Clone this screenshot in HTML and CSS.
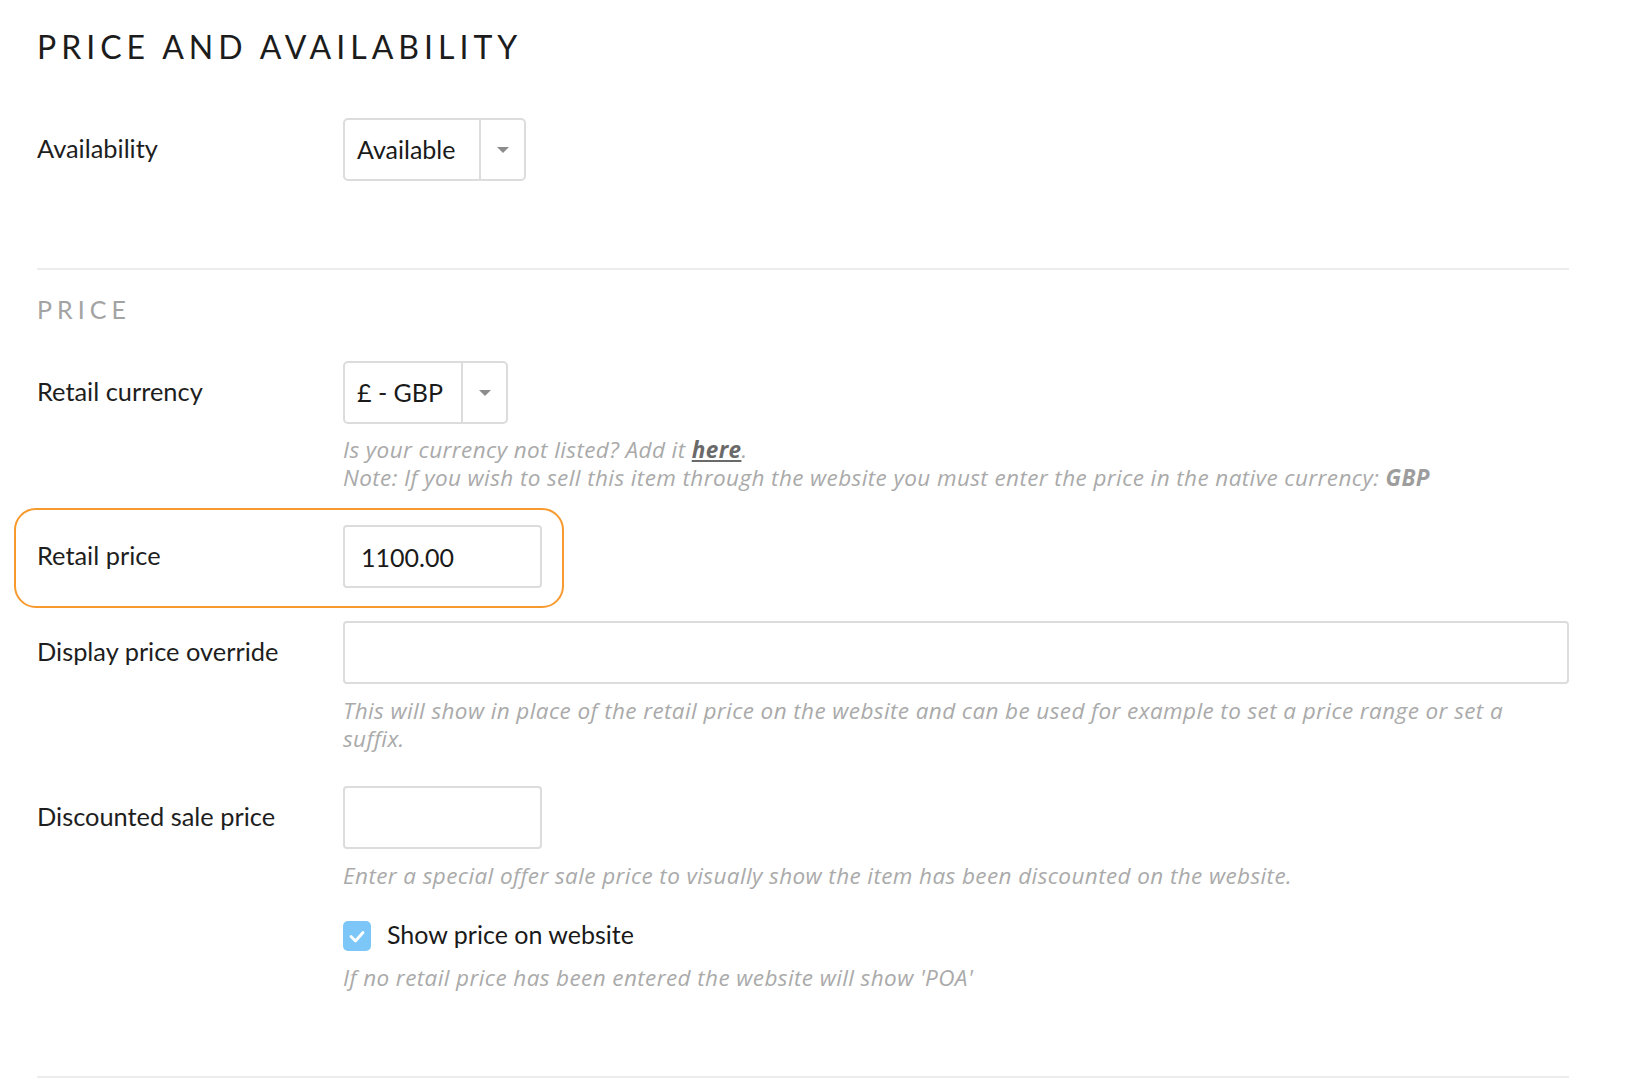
FILE: index.html
```html
<!DOCTYPE html>
<html lang="en">
<head>
<meta charset="utf-8">
<title>Price and availability</title>
<link rel="stylesheet" href="styles.css">
</head>
<body>
<div class="page">
  <h1 class="title">PRICE AND AVAILABILITY</h1>

  <div class="row row-first">
    <div class="label">Availability</div>
    <div class="control">
      <div class="select select-availability">
        <span class="select-value">Available</span>
        <span class="select-toggle"><span class="caret"></span></span>
      </div>
    </div>
  </div>

  <hr class="divider">

  <h2 class="subheading">PRICE</h2>

  <div class="row row-currency">
    <div class="label">Retail currency</div>
    <div class="control">
      <div class="select select-currency">
        <span class="select-value">£ - GBP</span>
        <span class="select-toggle"><span class="caret"></span></span>
      </div>
      <p class="help help-first">Is your currency not listed? Add it <a class="help-link" href="#">here</a>.<br>Note: If you wish to sell this item through the website you must enter the price in the native currency: <strong>GBP</strong></p>
    </div>
  </div>

  <div class="row">
    <span class="highlight" aria-hidden="true"></span>
    <div class="label">Retail price</div>
    <div class="control">
      <input class="input input-short" type="text" value="1100.00" readonly>
    </div>
  </div>

  <div class="row">
    <div class="label">Display price override</div>
    <div class="control">
      <input class="input input-full" type="text" value="" readonly>
      <p class="help">This will show in place of the retail price on the website and can be used for example to set a price range or set a suffix.</p>
    </div>
  </div>

  <div class="row">
    <div class="label">Discounted sale price</div>
    <div class="control">
      <input class="input input-short" type="text" value="" readonly>
      <p class="help">Enter a special offer sale price to visually show the item has been discounted on the website.</p>
    </div>
  </div>

  <div class="row row-check">
    <div class="label"></div>
    <div class="control">
      <label class="check">
        <span class="check-box">
          <svg viewBox="0 0 28 30" width="28" height="30" aria-hidden="true"><path d="M8 15.5 L12.5 20 L20 11.5" fill="none" stroke="#ffffff" stroke-width="2.8" stroke-linecap="round" stroke-linejoin="round"/></svg>
        </span>
        <span class="check-label">Show price on website</span>
      </label>
      <p class="help help-last">If no retail price has been entered the website will show 'POA'</p>
    </div>
  </div>

  <hr class="divider divider-bottom">
</div>
</body>
</html>
```

FILE: styles.css
```css
* {
  box-sizing: border-box;
}

html,
body {
  margin: 0;
  padding: 0;
  background: #ffffff;
}

body {
  font-family: Lato, "Liberation Sans", sans-serif;
  color: #1e1e1e;
  overflow: hidden;
}

.page {
  width: 1638px;
  height: 1080px;
  padding: 27px 69px 0 37px;
}

.title {
  margin: 0;
  font-size: 32px;
  line-height: 40px;
  font-weight: 400;
  letter-spacing: 5px;
  color: #1c1c1c;
}

.row {
  position: relative;
  display: grid;
  grid-template-columns: 306px 1fr;
  margin-top: 33px;
}

.row-first {
  margin-top: 51px;
}

.row-currency {
  margin-top: 37px;
}

.row-check {
  margin-top: 29px;
}

.label {
  font-size: 25.4px;
  line-height: 61px;
  color: #1e1e1e;
}

.row-check .label {
  line-height: 30px;
}

.control {
  min-width: 0;
}

.select {
  display: inline-flex;
  height: 63px;
  border: 2px solid #dcdcdc;
  border-radius: 5px;
  background: #ffffff;
}

.select-availability {
  width: 183px;
}

.select-currency {
  width: 165px;
}

.select-value {
  flex: 1;
  padding-left: 12px;
  font-size: 25px;
  line-height: 59px;
  color: #1a1a1a;
  white-space: nowrap;
}

.select-toggle {
  width: 45px;
  border-left: 2px solid #dcdcdc;
  display: flex;
  align-items: center;
  justify-content: center;
}

.caret {
  width: 0;
  height: 0;
  border-left: 6px solid transparent;
  border-right: 6px solid transparent;
  border-top: 6px solid #8c8c8c;
}

.input {
  display: block;
  height: 63px;
  margin: 0;
  padding: 0 16px;
  border: 2px solid #dcdcdc;
  border-radius: 4px;
  background: #ffffff;
  font-family: Lato, "Liberation Sans", sans-serif;
  font-size: 25px;
  color: #1a1a1a;
  outline: none;
}

.input-short {
  width: 199px;
}

.input-full {
  width: 100%;
}

.help {
  margin: 13px 0 0;
  font-family: "Open Sans", "Liberation Sans", sans-serif;
  font-size: 22.5px;
  line-height: 28px;
  letter-spacing: 0.4px;
  font-style: italic;
  font-weight: 400;
  color: #aaaaaa;
  padding-right: 40px;
}

.help-first {
  margin-top: 12px;
}

.help-last {
  margin-top: 15px;
}

.help-link {
  color: #6a6a6a;
  font-weight: 700;
  text-decoration: underline;
}

.help strong {
  font-weight: 700;
  color: #9d9d9d;
}

.divider {
  margin: 87px 0 0;
  border: 0;
  height: 2px;
  background: #ececec;
}

.divider-bottom {
  margin-top: 84px;
}

.subheading {
  margin: 24px 0 0;
  font-size: 25px;
  line-height: 30px;
  font-weight: 400;
  letter-spacing: 5px;
  color: #a3a3a3;
}

.highlight {
  position: absolute;
  left: -23px;
  top: -17px;
  width: 550px;
  height: 100px;
  border: 2.5px solid #f7992c;
  border-radius: 22px;
  pointer-events: none;
}

.check {
  display: flex;
  align-items: center;
  gap: 16px;
  height: 30px;
}

.check-box {
  width: 28px;
  height: 30px;
  border-radius: 5px;
  background: #7cc7f8;
  display: block;
  margin-top: 3px;
}

.check-box svg {
  display: block;
}

.check-label {
  font-size: 25px;
  line-height: 30px;
  color: #1a1a1a;
}
```
